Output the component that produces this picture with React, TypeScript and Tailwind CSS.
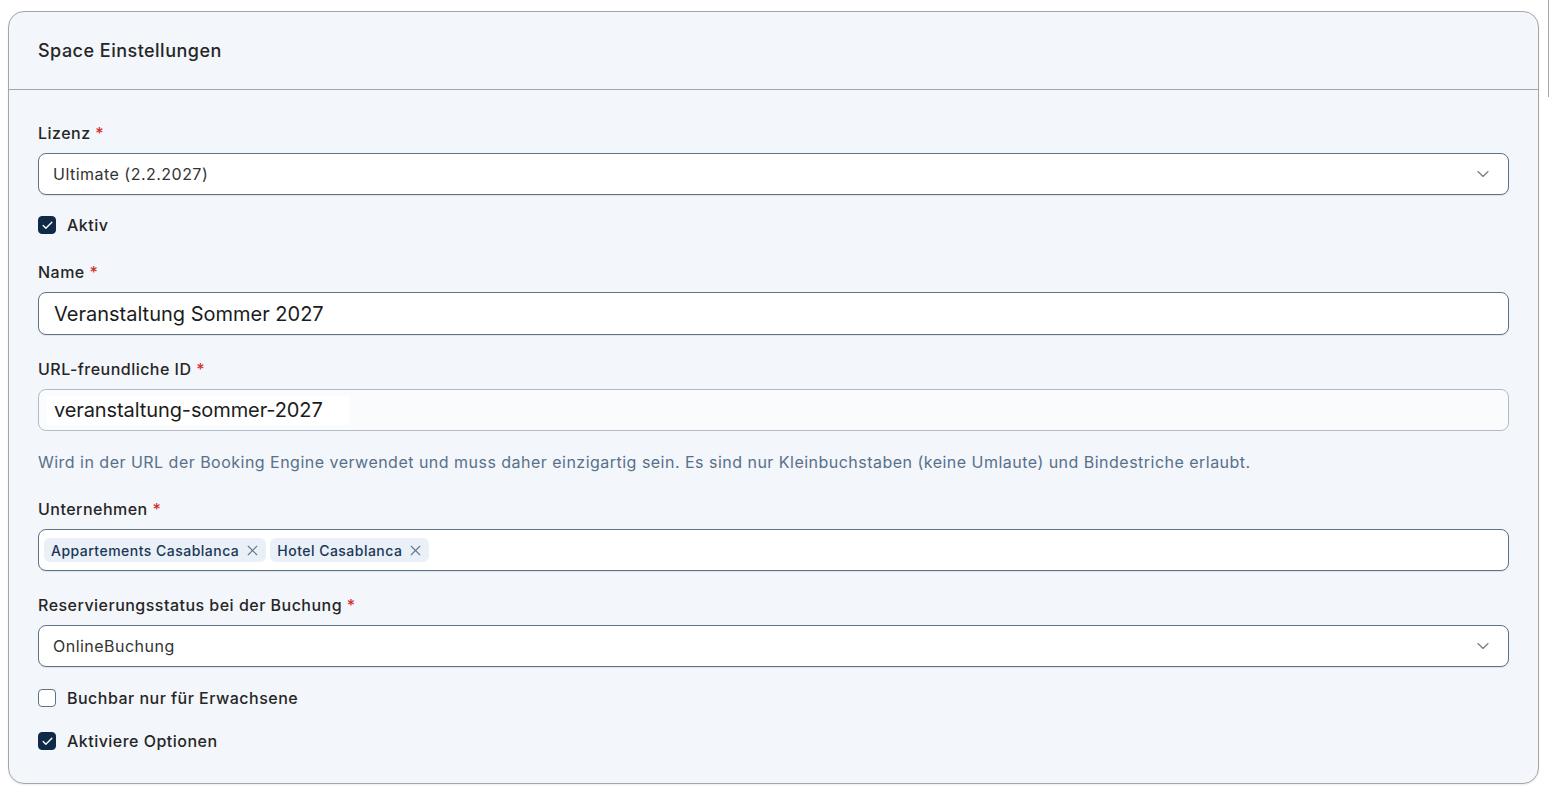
import React from 'react';
import { Check, ChevronDown, X } from 'lucide-react';

const Label: React.FC<{ text: string }> = ({ text }) => (
  <div className="h-6 leading-6 text-[16px] font-medium text-[#262626] mb-2">
    {text} <span className="text-[#d32f2f]">*</span>
  </div>
);

const Checkbox: React.FC<{ checked: boolean; label: string; className?: string }> = ({ checked, label, className }) => (
  <div className={`flex items-center h-6 ${className ?? ''}`}>
    {checked ? (
      <span className="w-[18px] h-[18px] rounded-[4px] bg-[#0f2a47] border border-[#0f2a47] flex items-center justify-center">
        <Check size={13} strokeWidth={2.5} className="text-white" />
      </span>
    ) : (
      <span className="w-[18px] h-[18px] rounded-[4px] bg-white border border-[#5f7387]" />
    )}
    <span className="ml-[11px] text-[16px] font-medium text-[#262626]">{label}</span>
  </div>
);

const SelectBox: React.FC<{ value: string }> = ({ value }) => (
  <div className="h-[42px] rounded-[8px] border border-[#5f7387] bg-white flex items-center justify-between pl-[14px] pr-[15px] shadow-[0_1px_1px_rgba(0,0,0,0.08)]">
    <span className="text-[16px] text-[#333]">{value}</span>
    <ChevronDown size={20} strokeWidth={1.4} className="text-[#7a7a7a]" />
  </div>
);

const Chip: React.FC<{ text: string }> = ({ text }) => (
  <span className="h-6 flex items-center gap-[5px] pl-[7px] pr-[5px] rounded-[6px] bg-[#e9f0f7] text-[14px] font-medium text-[#1b3656]">
    {text}
    <X size={17} strokeWidth={1.6} className="text-[#627890]" />
  </span>
);

export default function App() {
  return (
    <div className="relative min-h-screen bg-white pt-[11px] pl-[8px] pr-[10px] pb-[11px] font-['Inter',sans-serif] tracking-[0.03em]">
      <div className="absolute right-0 top-0 w-px h-[97px] bg-[#a8a8a8]" />
      <div className="rounded-[16px] border border-[#a6a6a6] bg-[#f3f6fb] shadow-[0_1px_2px_rgba(0,0,0,0.08)]">
        {/* Header */}
        <div className="h-[78px] flex items-center px-[29px] border-b border-[#a3a7ab]">
          <h2 className="text-[18px] font-medium text-[#262626]">Space Einstellungen</h2>
        </div>

        {/* Body */}
        <div className="pt-[31px] px-[29px] pb-[30px]">
          <Label text="Lizenz" />
          <SelectBox value="Ultimate (2.2.2027)" />

          <Checkbox checked label="Aktiv" className="mt-[18px]" />

          <div className="mt-[23px]">
            <Label text="Name" />
            <div className="h-[43px] rounded-[8px] border border-[#5f7387] bg-white flex items-center pl-[15px] shadow-[0_1px_1px_rgba(0,0,0,0.08)]">
              <span className="text-[20px] text-[#1c1c1c] tracking-normal">Veranstaltung Sommer 2027</span>
            </div>
          </div>

          <div className="mt-[22px]">
            <Label text="URL-freundliche ID" />
            <div className="h-[42px] rounded-[8px] border border-[#b3bcc5] bg-[#f9fbfd] flex items-center pl-[8px]">
              <span className="bg-white h-[29px] w-[302px] flex items-center pl-[7px] text-[20px] text-[#1c1c1c] tracking-[-0.005em]">
                veranstaltung-sommer-2027
              </span>
            </div>
          </div>

          <p className="mt-[19px] h-6 leading-6 text-[16px] text-[#587089]">
            Wird in der URL der Booking Engine verwendet und muss daher einzigartig sein. Es sind nur Kleinbuchstaben (keine Umlaute) und Bindestriche erlaubt.
          </p>

          <div className="mt-[23px]">
            <Label text="Unternehmen" />
            <div className="h-[42px] rounded-[8px] border border-[#5f7387] bg-white flex items-center gap-1 pl-[5px] shadow-[0_1px_1px_rgba(0,0,0,0.08)]">
              <Chip text="Appartements Casablanca" />
              <Chip text="Hotel Casablanca" />
            </div>
          </div>

          <div className="mt-[22px]">
            <Label text="Reservierungsstatus bei der Buchung" />
            <SelectBox value="OnlineBuchung" />
          </div>

          <Checkbox checked={false} label="Buchbar nur für Erwachsene" className="mt-[19px]" />
          <Checkbox checked label="Aktiviere Optionen" className="mt-[19px]" />
        </div>
      </div>
    </div>
  );
}
